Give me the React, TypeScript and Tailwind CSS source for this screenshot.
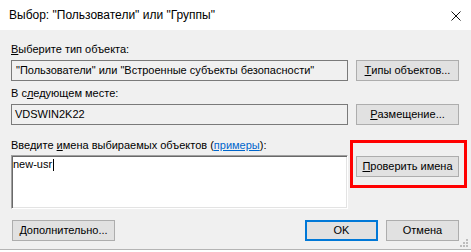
import React from "react";

const font = { fontFamily: '"Liberation Sans", Arial, sans-serif' };

function Btn({ children, className = "" }: { children: React.ReactNode; className?: string }) {
  return (
    <div
      className={
        "flex h-[21px] items-center justify-center border border-[#adadad] bg-[#e1e1e1] text-[11px] leading-[15px] text-black " +
        className
      }
    >
      {children}
    </div>
  );
}

export default function App() {
  return (
    <div
      className="relative h-[252px] w-[471px] overflow-hidden bg-[#f0f0f0] text-[11px] leading-[15px] text-black"
      style={font}
    >
      {/* Title bar */}
      <div className="flex h-[30px] items-center justify-between bg-white pl-[9px] pr-[10px]">
        <span className="text-[12px]">Выбор: "Пользователи" или "Группы"</span>
        <svg width="10" height="10" viewBox="0 0 10 10" className="mt-[1px]">
          <path d="M0.5 0.5 L9.5 9.5 M9.5 0.5 L0.5 9.5" stroke="#111" strokeWidth="1" fill="none" />
        </svg>
      </div>

      {/* Body */}
      <div className="flex flex-col px-[11px]">
        <div className="mt-[12px]">
          <span className="underline">В</span>ыберите тип объекта:
        </div>
        <div className="mt-[3px] flex items-center">
          <div className="flex h-[21px] w-[337px] items-center border border-[#7a7a7a] bg-[#f0f0f0] pl-[4px]">
            "Пользователи" или "Встроенные субъекты безопасности"
          </div>
          <Btn className="ml-[8px] w-[103px]">
            <span className="underline">Т</span>ипы объектов...
          </Btn>
        </div>

        <div className="mt-[5px]">
          В с<span className="underline">л</span>едующем месте:
        </div>
        <div className="mt-[3px] flex items-center">
          <div className="flex h-[21px] w-[337px] items-center border border-[#7a7a7a] bg-[#f0f0f0] pl-[3px]">
            VDSWIN2K22
          </div>
          <Btn className="ml-[8px] w-[103px]">
            <span className="underline">Р</span>азмещение...
          </Btn>
        </div>

        <div className="mt-[13px]">
          Введите <span className="underline">и</span>мена выбираемых объектов (
          <span className="text-[#0066cc] underline">примеры</span>):
        </div>
        <div className="mt-[2px] flex items-start">
          <div className="h-[54px] w-[337px] border border-t-[#a0a0a0] border-l-[#a0a0a0] border-b-white border-r-white bg-white pl-[1px] pt-[1px] shadow-[inset_1px_1px_0_#696969,inset_-1px_-1px_0_#e3e3e3]">
            <span className="inline-flex items-center">
              new-usr
              <span className="ml-[1px] inline-block h-[12px] w-[1px] bg-black" />
            </span>
          </div>
          <Btn className="ml-[8px] mt-[1px] w-[103px]">
            <span className="underline">П</span>роверить имена
          </Btn>
        </div>

        <div className="mt-[11px] flex items-center">
          <Btn className="ml-[1px] w-[103px]">
            <span className="underline">Д</span>ополнительно...
          </Btn>
          <div className="ml-[190px] flex h-[21px] w-[73px] items-center justify-center border-2 border-[#0078d7] bg-[#e1e1e1]">
            OK
          </div>
          <Btn className="ml-[8px] w-[73px]">Отмена</Btn>
        </div>
      </div>

      {/* Size grip */}
      <svg width="8" height="8" viewBox="0 0 8 8" className="absolute left-[460px] top-[239px]">
        <rect x="6" y="0" width="2" height="2" fill="#bdbdbd" />
        <rect x="3" y="3" width="2" height="2" fill="#bdbdbd" />
        <rect x="6" y="3" width="2" height="2" fill="#bdbdbd" />
        <rect x="0" y="6" width="2" height="2" fill="#bdbdbd" />
        <rect x="3" y="6" width="2" height="2" fill="#bdbdbd" />
        <rect x="6" y="6" width="2" height="2" fill="#bdbdbd" />
      </svg>

      {/* Bottom window edge */}
      <div className="absolute bottom-0 left-0 h-[3px] w-full border-t border-[#b4b4b4] bg-white" />

      {/* Red highlight annotation */}
      <div className="pointer-events-none absolute left-[350px] top-[140px] h-[48px] w-[117px] border-[3px] border-[#ff0000]" />
    </div>
  );
}
